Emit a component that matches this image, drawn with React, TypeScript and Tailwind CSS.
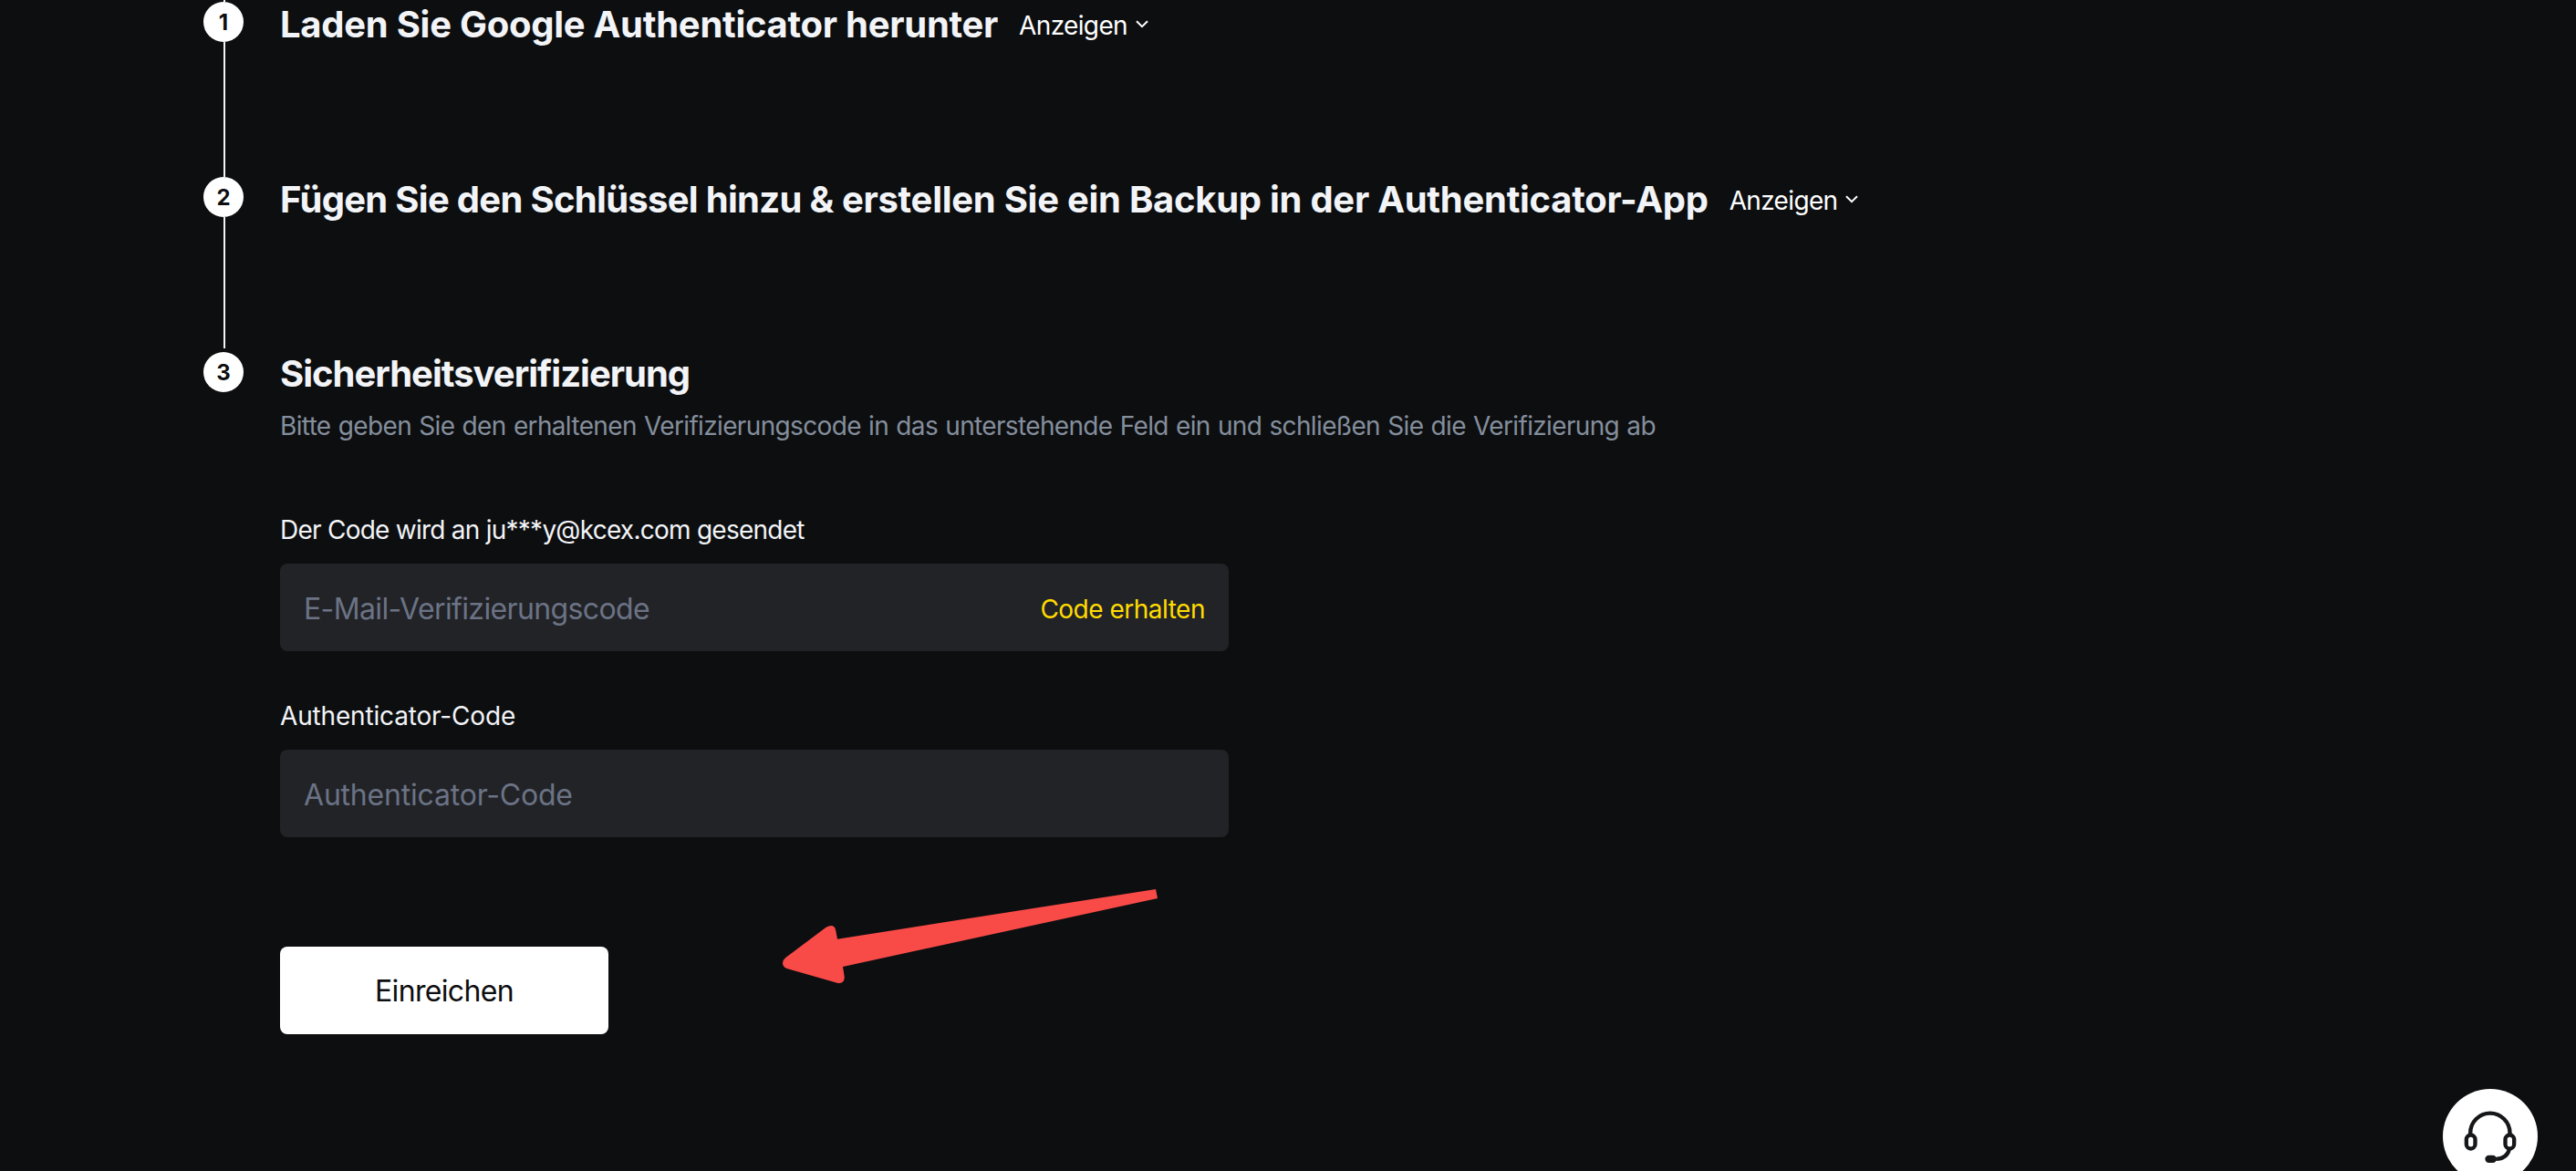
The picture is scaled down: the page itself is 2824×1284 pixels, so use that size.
import { useState, type ReactNode } from 'react'

function ChevronDown() {
  return (
    <svg viewBox="0 0 14 9" className="mb-[2px] h-[9px] w-[14px]" fill="none" stroke="currentColor" strokeWidth="2">
      <path d="M1 1.2 7 7.2 13 1.2" />
    </svg>
  )
}

function HeadsetIcon() {
  return (
    <svg viewBox="0 0 240 240" className="h-20 w-20" fill="none" stroke="#161719" strokeWidth="13">
      <path d="M54.5 120v-5a65 65 0 0 1 130 0v5" />
      <rect x="41.5" y="121.5" width="29" height="45" rx="14.5" />
      <rect x="169.5" y="121.5" width="29" height="45" rx="14.5" />
      <path d="M183 168c-5 19-20 32-44 32.500" />
      <rect x="103" y="188" width="38" height="25" rx="12.5" fill="#161719" stroke="none" />
    </svg>
  )
}

function Arrow() {
  return (
    <svg viewBox="0 0 1380 420" className="pointer-events-none absolute left-[840px] top-[960px] h-[140px] w-[460px]" fill="#f84b48">
      <path d="M1281 45 1287 75 252 300 257 332Q259 358 233 353L68 306Q54 300 54 288 54 278 64 270L196 171Q224 155 229 182L234 209Z" />
    </svg>
  )
}

function ShowToggle() {
  return (
    <button type="button" className="ml-[23px] flex items-center gap-[9px] text-[28px] leading-[48px] text-white">
      <span className="pt-[2px] tracking-[-0.65px]">Anzeigen</span>
      <ChevronDown />
    </button>
  )
}

function Step({ number, line, children }: { number: number; line?: string; children: ReactNode }) {
  return (
    <div className={`flex gap-10 ${line ? 'h-48' : ''}`}>
      <div className="flex w-11 shrink-0 flex-col">
        <div className="flex h-11 w-11 shrink-0 items-center justify-center rounded-full bg-white pt-px text-2xl font-bold text-[#0d0e10]">
          {number}
        </div>
        {line && <div className={`ml-[22px] w-[2px] bg-[#f2f4f7] ${line}`} />}
      </div>
      <div className="min-w-0 flex-1">{children}</div>
    </div>
  )
}

function CodeField({ placeholder, tracking, action }: { placeholder: string; tracking: string; action?: string }) {
  const [value, setValue] = useState('')

  return (
    <div className="mt-[17px] flex h-24 w-[1040px] items-center rounded-lg bg-[#222327] px-[26px] pt-[3px]">
      <input
        value={value}
        onChange={(e) => setValue(e.target.value)}
        placeholder={placeholder}
        className={`h-12 min-w-0 flex-1 bg-transparent text-[32px] text-white outline-none placeholder:text-[#6b7385] ${tracking}`}
      />
      {action && (
        <button type="button" className="text-[28px] tracking-[-0.5px] text-[#ffdc00]">
          {action}
        </button>
      )}
    </div>
  )
}

export default function App() {
  return (
    <div className="relative h-[1284px] w-full overflow-hidden whitespace-nowrap bg-[#0d0e10] pl-[223px] font-['Inter',sans-serif] font-[370] text-[#f2f4f7]">
      <div className="ml-[22px] h-[2px] w-[2px] bg-[#f2f4f7]" />

      <Step number={1} line="h-[148px]">
        <div className="flex items-center">
          <h2 className="text-[40px] font-bold leading-[48px] tracking-[-0.27px]">Laden Sie Google Authenticator herunter</h2>
          <ShowToggle />
        </div>
      </Step>

      <Step number={2} line="h-[144px]">
        <div className="flex items-center">
          <h2 className="text-[40px] font-bold leading-[48px] tracking-[-0.27px]">
            <span className="tracking-[-0.7px]">Fügen Sie den Schlüssel hinzu &amp;</span> erstellen Sie ein Backup in der Authenticator-App
          </h2>
          <ShowToggle />
        </div>
      </Step>

      <Step number={3}>
        <h2 className="text-[40px] font-bold leading-[48px] tracking-[-1px]">Sicherheitsverifizierung</h2>
        <p className="mt-[13px] text-[28px] leading-10 tracking-[-0.65px] text-[#848e9c] [word-spacing:1px]">
          Bitte geben Sie den erhaltenen Verifizierungscode in das unterstehende Feld ein und schließen Sie die Verifizierung ab
        </p>

        <p className="mt-[74px] text-[28px] leading-10 tracking-[-0.75px]">Der Code wird an ju***y@kcex.com gesendet</p>
        <CodeField placeholder="E-Mail-Verifizierungscode" tracking="tracking-[-0.62px]" action="Code erhalten" />

        <p className="mt-[51px] text-[28px] leading-10 tracking-[-0.17px]">Authenticator-Code</p>
        <CodeField placeholder="Authenticator-Code" tracking="tracking-[-0.2px]" />

        <button type="button" className="mt-[120px] h-24 w-[360px] rounded-lg bg-white pt-[2px] text-[32px] tracking-[-0.65px] text-[#0d0e10]">
          Einreichen
        </button>
      </Step>

      <Arrow />

      <button type="button" aria-label="Support" className="absolute right-[42px] top-[1194px] flex h-[104px] w-[104px] items-center justify-center rounded-full bg-white pb-1">
        <HeadsetIcon />
      </button>
    </div>
  )
}
